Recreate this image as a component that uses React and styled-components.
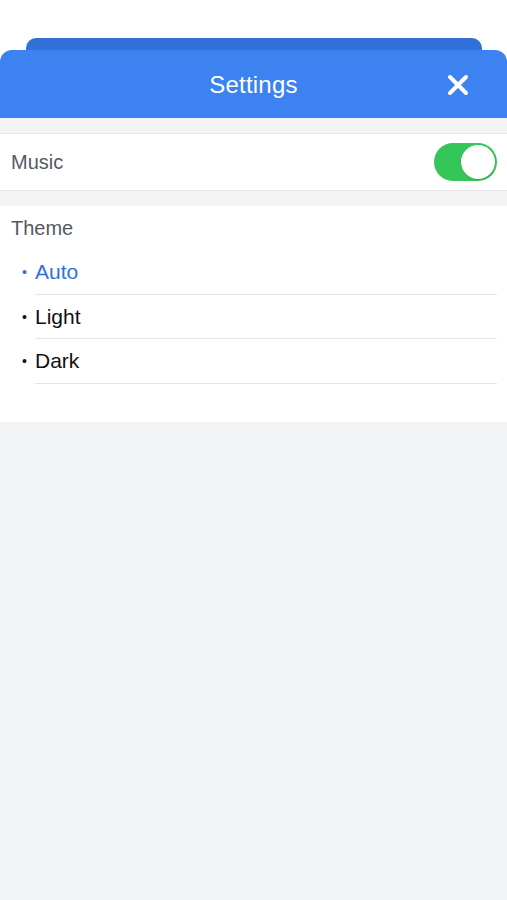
import React, { useState } from 'react';
import styled, { createGlobalStyle } from 'styled-components';

const Global = createGlobalStyle`
  html, body {
    margin: 0;
    padding: 0;
    background: #f2f3f5;
    font-family: "Liberation Sans", Arial, sans-serif;
  }
`;

const Page = styled.div`
  min-height: 900px;
  background: #f2f3f5;
`;

const Top = styled.div`
  background: #fff;
  padding-top: 38px;
  display: flex;
  flex-direction: column;
`;

const BackCard = styled.div`
  margin: 0 25px 0 26px;
  height: 24px;
  margin-bottom: -12px;
  background: #3271d9;
  border-radius: 10px 10px 0 0;
`;

const Header = styled.header`
  position: relative;
  height: 68px;
  background: #3c82f1;
  border-radius: 12px 12px 0 0;
  display: flex;
  align-items: center;
  justify-content: center;
`;

const Title = styled.h1`
  margin: 2px 0 0;
  font-size: 24px;
  font-weight: 400;
  color: #fff;
  letter-spacing: 0.2px;
`;

const Close = styled.button`
  position: absolute;
  right: 37px;
  top: 23px;
  width: 24px;
  height: 24px;
  padding: 0;
  border: 0;
  background: none;
  display: flex;
  align-items: center;
  justify-content: center;
`;

const Section = styled.section`
  background: #fff;
  margin-top: 15px;
  border-top: 1px solid ${p => (p.bordered ? '#e6e7ea' : 'transparent')};
  border-bottom: 1px solid ${p => (p.bordered ? '#e6e7ea' : 'transparent')};
  padding: ${p => p.pad};
`;

const Row = styled.div`
  display: flex;
  align-items: center;
  justify-content: space-between;
  height: 56px;
  padding: 0 10px 0 11px;
`;

const Label = styled.span`
  font-size: 20px;
  color: #55595f;
`;

const Toggle = styled.button`
  width: 63px;
  height: 38px;
  border-radius: 19px;
  border: 0;
  padding: 2px;
  background: ${p => (p.on ? '#34c659' : '#e5e5ea')};
  display: flex;
  justify-content: ${p => (p.on ? 'flex-end' : 'flex-start')};
  align-items: center;
  cursor: pointer;
`;

const Knob = styled.span`
  width: 34px;
  height: 34px;
  border-radius: 50%;
  background: #fff;
  box-shadow: 0 1px 2px rgba(0, 0, 0, 0.15);
`;

const ThemeLabel = styled.div`
  padding: 0 11px;
  height: 22px;
  line-height: 22px;
  font-size: 20px;
  color: #55595f;
`;

const List = styled.ul`
  list-style: none;
  margin: 11px 0 0;
  padding: 0 10px 0 22px;
`;

const Item = styled.li`
  display: flex;
  align-items: center;
  height: 44.5px;
  font-size: 21px;
  color: ${p => (p.active ? '#2f6fe0' : '#111')};
  cursor: pointer;
`;

const Bullet = styled.span`
  width: 13px;
  font-size: 14px;
  line-height: 1;
`;

const ItemText = styled.span`
  flex: 1;
  height: 43.5px;
  line-height: 44px;
  border-bottom: 1px solid #e4e5e8;
`;

export default function App() {
  const [music, setMusic] = useState(true);
  const [theme, setTheme] = useState('Auto');

  return (
    <Page>
      <Global />
      <Top>
        <BackCard />
        <Header>
          <Title>Settings</Title>
          <Close aria-label="Close">
            <svg width="22" height="22" viewBox="0 0 22 22">
              <path d="M3 3L19 19M19 3L3 19" stroke="#fff" strokeWidth="4" strokeLinecap="round" />
            </svg>
          </Close>
        </Header>
      </Top>
      <Section bordered pad="0">
        <Row>
          <Label>Music</Label>
          <Toggle on={music ? 1 : 0} onClick={() => setMusic(!music)}>
            <Knob />
          </Toggle>
        </Row>
      </Section>
      <Section pad="10px 0 37px">
        <ThemeLabel>Theme</ThemeLabel>
        <List>
          {['Auto', 'Light', 'Dark'].map(t => (
            <Item key={t} active={theme === t ? 1 : 0} onClick={() => setTheme(t)}>
              <Bullet>•</Bullet>
              <ItemText>{t}</ItemText>
            </Item>
          ))}
        </List>
      </Section>
    </Page>
  );
}
